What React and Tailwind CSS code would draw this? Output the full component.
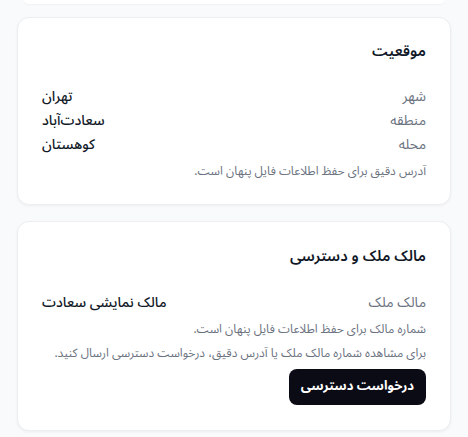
import React from 'react';

function Row({ label, value }) {
  return (
    <div className="flex items-center justify-between h-6">
      <span className="text-[14px] leading-5 text-[#6b7280]">{label}</span>
      <span className="text-[14px] leading-5 font-medium text-[#111827]">{value}</span>
    </div>
  );
}

export default function App() {
  return (
    <div
      dir="rtl"
      className="min-h-[437px] bg-[#f9fafb] px-[17px] pb-6"
      style={{ fontFamily: '"Noto Sans Arabic", "DejaVu Sans", sans-serif' }}
    >
      {/* bottom edge of the card above */}
      <div className="mx-[7px] h-[4px] bg-white rounded-b-xl shadow-[0_1px_2px_rgba(0,0,0,0.04)]" />

      <div className="mt-[13px] flex flex-col gap-[16px]">
        {/* location */}
        <div className="bg-white border border-[#eceef2] rounded-xl shadow-[0_1px_3px_rgba(0,0,0,0.05)] px-6 pt-[21px] pb-[20px]">
          <h3 className="text-[15px] font-semibold text-[#111827] leading-6">موقعیت</h3>
          <div className="mt-[22px]">
            <Row label="شهر" value="تهران" />
            <Row label="منطقه" value="سعادت‌آباد" />
            <Row label="محله" value="کوهستان" />
          </div>
          <p className="mt-[3px] text-[12px] leading-6 text-[#6b7280]">آدرس دقیق برای حفظ اطلاعات فایل پنهان است.</p>
        </div>

        {/* owner & access */}
        <div className="bg-white border border-[#eceef2] rounded-xl shadow-[0_1px_3px_rgba(0,0,0,0.05)] px-6 pt-[22px] pb-[25px]">
          <h3 className="text-[15px] font-semibold text-[#111827] leading-6">مالک ملک و دسترسی</h3>
          <div className="mt-[23px] flex items-center justify-between h-6">
            <span className="text-[14px] leading-5 text-[#6b7280]">مالک ملک</span>
            <span className="text-[14px] leading-5 font-medium text-[#111827]">مالک نمایشی سعادت</span>
          </div>
          <p className="mt-[3px] text-[12px] leading-6 text-[#6b7280]">شماره مالک برای حفظ اطلاعات فایل پنهان است.</p>
          <p className="text-[12px] leading-6 text-[#6b7280]">برای مشاهده شماره مالک ملک یا آدرس دقیق، درخواست دسترسی ارسال کنید.</p>
          <button className="mt-[3px] h-9 px-3 rounded-lg bg-[#0b0b16] text-white text-[13px] font-bold">
            درخواست دسترسی
          </button>
        </div>
      </div>
    </div>
  );
}
